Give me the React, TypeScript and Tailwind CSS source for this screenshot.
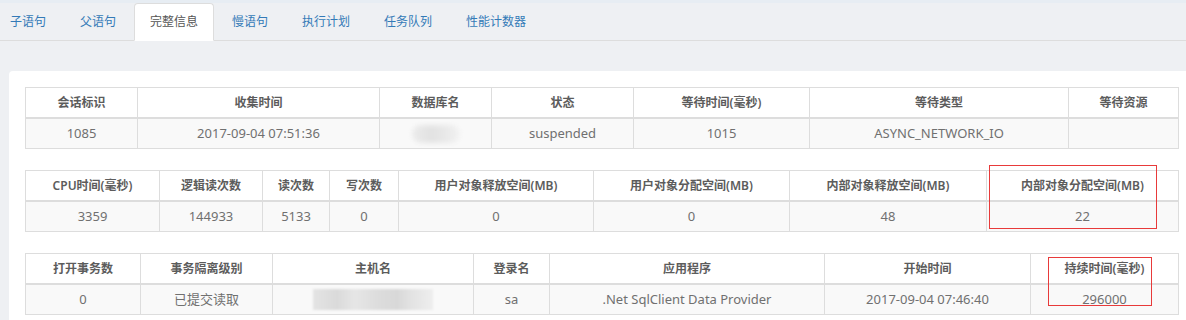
import React from "react";

const FONT = '"Noto Sans", "Noto Sans CJK SC", sans-serif';

const tabs = ["子语句", "父语句", "完整信息", "慢语句", "执行计划", "任务队列", "性能计数器"];

type Cell = string | { blur: "db" | "host" };

function DataTable({
  cols,
  headers,
  values,
}: {
  cols: string;
  headers: string[];
  values: Cell[];
}) {
  return (
    <div className="w-[1154px] border border-[#ddd]">
      <div className={`grid ${cols} h-[31px] border-b-2 border-[#ddd] bg-white`}>
        {headers.map((h, i) => (
          <div
            key={i}
            className={`flex items-center justify-center text-[12px] font-semibold text-[#5c5c5c] whitespace-nowrap ${
              i < headers.length - 1 ? "border-r border-[#ddd]" : ""
            }`}
          >
            {h}
          </div>
        ))}
      </div>
      <div className={`grid ${cols} h-[29px] bg-[#f9f9f9]`}>
        {values.map((v, i) => (
          <div
            key={i}
            className={`flex items-center justify-center text-[13px] text-[#707070] whitespace-nowrap ${
              i < values.length - 1 ? "border-r border-[#ddd]" : ""
            }`}
          >
            {typeof v === "string" ? (
              v
            ) : v.blur === "db" ? (
              <div className="w-[48px] h-[18px] rounded-[9px] bg-[linear-gradient(90deg,#ececec,#e2e2e2_40%,#e9e9e9_70%,#f2f2f2)] blur-[2px]" />
            ) : (
              <div className="w-[120px] h-[21px] bg-[linear-gradient(90deg,#e4e4e4,#dadada_20%,#e6e6e6_35%,#dcdcdc_55%,#d8d8d8_70%,#e3e3e3_82%,#eeeeee)] blur-[1px]" />
            )}
          </div>
        ))}
      </div>
    </div>
  );
}

export default function App() {
  return (
    <div
      className="relative w-[1186px] h-[320px] overflow-hidden bg-[#eef0f3]"
      style={{ fontFamily: FONT }}
    >
      <div className="h-[3px] bg-[#e7edf3]" />
      <ul className="flex -ml-[6px] border-b border-[#ddd]">
        {tabs.map((t, i) => {
          const active = i === 2;
          return (
            <li
              key={t}
              className={`-mb-px mr-[2px] flex h-[38px] items-center rounded-t-[4px] border px-[15px] text-[12px] leading-none ${
                active
                  ? "border-[#ddd] border-b-white bg-white text-[#555]"
                  : "border-transparent text-[#337ab7]"
              }`}
            >
              {t}
            </li>
          );
        })}
      </ul>

      <div className="ml-[9px] mt-[30px] flex flex-col gap-[21px] rounded-tl-[4px] bg-white pb-[5px] pl-[16px] pt-[16px]">
        <DataTable
          cols="grid-cols-[112px_242px_112px_142px_176px_259px_109px]"
          headers={["会话标识", "收集时间", "数据库名", "状态", "等待时间(毫秒)", "等待类型", "等待资源"]}
          values={["1085", "2017-09-04 07:51:36", { blur: "db" }, "suspended", "1015", "ASYNC_NETWORK_IO", ""]}
        />
        <DataTable
          cols="grid-cols-[134px_103px_67px_69px_195px_196px_197px_191px]"
          headers={[
            "CPU时间(毫秒)",
            "逻辑读次数",
            "读次数",
            "写次数",
            "用户对象释放空间(MB)",
            "用户对象分配空间(MB)",
            "内部对象释放空间(MB)",
            "内部对象分配空间(MB)",
          ]}
          values={["3359", "144933", "5133", "0", "0", "0", "48", "22"]}
        />
        <DataTable
          cols="grid-cols-[115px_132px_201px_76px_275px_206px_147px]"
          headers={["打开事务数", "事务隔离级别", "主机名", "登录名", "应用程序", "开始时间", "持续时间(毫秒)"]}
          values={["0", "已提交读取", { blur: "host" }, "sa", ".Net SqlClient Data Provider", "2017-09-04 07:46:40", "296000"]}
        />
      </div>

      <div className="pointer-events-none absolute left-[989px] top-[165px] h-[64px] w-[168px] border border-[#e83a3a]" />
      <div className="pointer-events-none absolute left-[1048px] top-[257px] h-[49px] w-[104px] border border-[#e83a3a]" />
    </div>
  );
}
